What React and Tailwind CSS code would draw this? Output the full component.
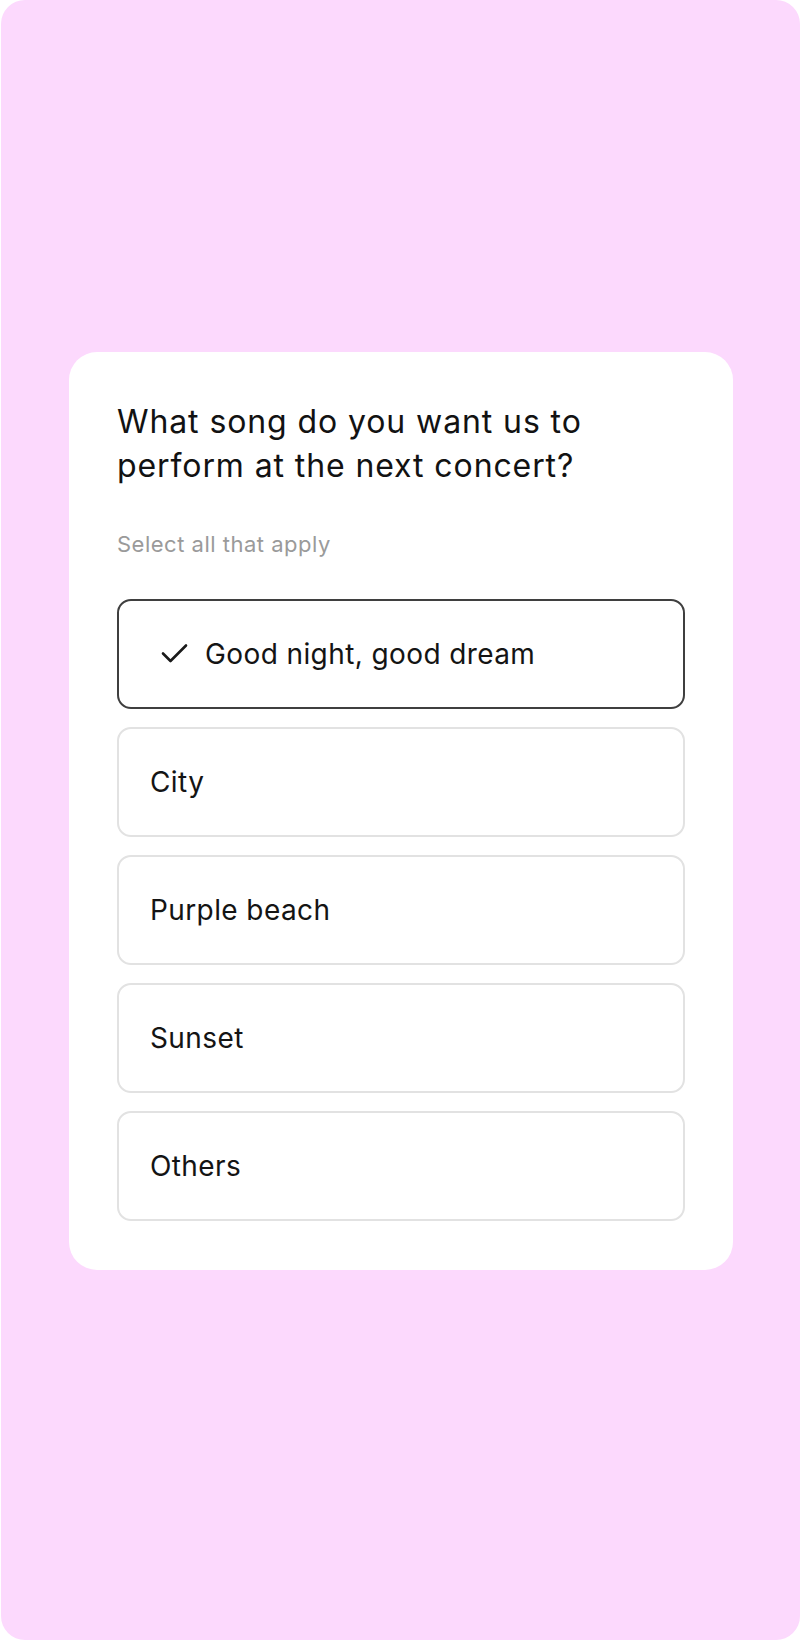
import React, { useState } from 'react';

const songs = ['Good night, good dream', 'City', 'Purple beach', 'Sunset', 'Others'];

const CheckIcon = () => (
  <svg width="28" height="22" viewBox="0 0 28 22" fill="none" className="shrink-0">
    <path d="M2 10.5 9.5 18 25 2.5" stroke="#1a1a1a" strokeWidth="2.6" strokeLinecap="round" strokeLinejoin="round" />
  </svg>
);

const App = () => {
  const [selected, setSelected] = useState(['Good night, good dream']);

  const toggle = (song) => {
    setSelected(selected.includes(song) ? selected.filter(s => s !== song) : [...selected, song]);
  };

  return (
    <div className="w-[800px] h-[1640px] bg-white" style={{ fontFamily: 'Inter, "Noto Sans", sans-serif' }}>
      <div className="ml-px h-full rounded-[24px] bg-[#fcd9fd] pt-[352px] pl-[68px] pr-[67px]">
        <div className="bg-white rounded-[28px] px-[48px] pt-[48px] pb-[49px]">
          <h1 className="text-[32px] leading-[44px] tracking-[0.9px] text-[#121212] font-normal">
            What song do you want us to perform at the next concert?
          </h1>
          <p className="mt-[42px] text-[22px] leading-[28px] tracking-[0.5px] text-[#9a9a9a]">Select all that apply</p>

          <div className="mt-[41px] flex flex-col gap-[18px]">
            {songs.map(song => {
              const isOn = selected.includes(song);
              return (
                <button
                  key={song}
                  onClick={() => toggle(song)}
                  className={`h-[110px] w-full flex items-center gap-[16px] rounded-[14px] border-2 text-left ${
                    isOn ? 'border-[#3f3f3f] pl-[42px]' : 'border-[#e2e2e2] pl-[31px]'
                  }`}
                >
                  {isOn && <CheckIcon />}
                  <span className="text-[28px] leading-[36px] tracking-[0.4px] text-[#141414]">{song}</span>
                </button>
              );
            })}
          </div>
        </div>
      </div>
    </div>
  );
};

export default App;
